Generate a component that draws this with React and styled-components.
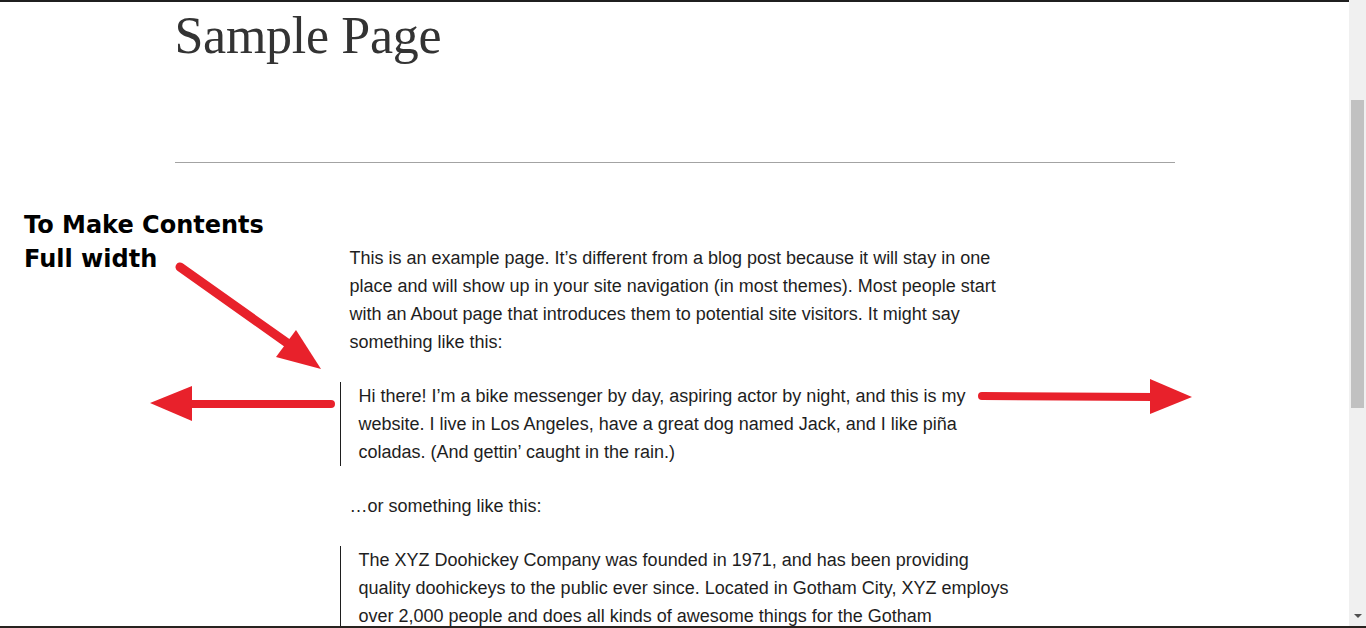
import React from "react";
import styled, { createGlobalStyle } from "styled-components";

const GlobalStyle = createGlobalStyle`
  html, body {
    margin: 0;
    padding: 0;
    background: #ffffff;
    overflow: hidden;
  }
`;

const Window = styled.div`
  position: relative;
  width: 1366px;
  height: 628px;
  display: flex;
  flex-direction: column;
  overflow: hidden;
`;

const Viewport = styled.div`
  flex: 1;
  min-height: 0;
  display: flex;
`;

const Page = styled.main`
  flex: 1;
  min-width: 0;
  border-top: 2px solid #1f1f1f;
  overflow: hidden;
`;

const Header = styled.header`
  width: 1000px;
  margin: 0 auto;
`;

const Title = styled.h1`
  margin: 8px 0 0;
  font-family: "Liberation Serif", "Times New Roman", serif;
  font-size: 52px;
  font-weight: 400;
  line-height: 1;
  color: #333;
  letter-spacing: -0.3px;
`;

const Rule = styled.hr`
  margin: 100px 0 0;
  border: 0;
  border-top: 1px solid #a3a3a3;
`;

const Content = styled.article`
  width: 650px;
  margin: 81px auto 0;
  display: flex;
  flex-direction: column;
  gap: 26px;
  font-family: "Liberation Sans", Arial, sans-serif;
  font-size: 18px;
  line-height: 28px;
  color: #1e1e1e;
`;

const Paragraph = styled.p`
  margin: 0;
`;

const Quote = styled.blockquote`
  margin: 0 -14px 0 -10px;
  padding-left: 18px;
  border-left: 1px solid #1e1e1e;
`;

const Scrollbar = styled.div`
  width: 17px;
  background: #f0f0f0;
  display: flex;
  flex-direction: column;
  align-items: center;
  padding-top: 100px;
`;

const Thumb = styled.div`
  width: 13px;
  height: 308px;
  background: #c1c1c1;
`;

const Spacer = styled.div`
  flex: 1;
`;

const DownArrow = styled.div`
  width: 0;
  height: 0;
  margin-bottom: 8px;
  border-left: 4px solid transparent;
  border-right: 4px solid transparent;
  border-top: 4px solid #505050;
`;

const BottomBar = styled.div`
  height: 2px;
  background: #28231f;
`;

const Note = styled.div`
  position: absolute;
  left: 24px;
  top: 208px;
  font-family: "DejaVu Sans", Verdana, sans-serif;
  font-weight: 700;
  font-size: 24px;
  line-height: 34px;
  color: #000;
`;

const Overlay = styled.svg`
  position: absolute;
  left: 0;
  top: 0;
  pointer-events: none;
`;

const RED = "#e8212b";

const Arrows = () => (
  <Overlay width="1366" height="628" viewBox="0 0 1366 628">
    <g fill={RED} stroke={RED} strokeLinecap="round">
      <line x1="180" y1="267" x2="290" y2="345" strokeWidth="9" />
      <polygon points="296,330 276,357 321,369" stroke="none" />

      <line x1="331" y1="404" x2="185" y2="404" strokeWidth="8" />
      <polygon points="192,386 192,421 150,403" stroke="none" />

      <line x1="982" y1="396" x2="1155" y2="397" strokeWidth="8" />
      <polygon points="1150,379 1150,414 1192,397" stroke="none" />
    </g>
  </Overlay>
);

export default function App() {
  return (
    <>
      <GlobalStyle />
      <Window>
        <Viewport>
          <Page>
            <Header>
              <Title>Sample Page</Title>
              <Rule />
            </Header>
            <Content>
              <Paragraph>
                This is an example page. It’s different from a blog post because it will stay in one
                place and will show up in your site navigation (in most themes). Most people start
                with an About page that introduces them to potential site visitors. It might say
                something like this:
              </Paragraph>
              <Quote>
                <Paragraph>
                  Hi there! I’m a bike messenger by day, aspiring actor by night, and this is my
                  website. I live in Los Angeles, have a great dog named Jack, and I like piña
                  coladas. (And gettin’ caught in the rain.)
                </Paragraph>
              </Quote>
              <Paragraph>…or something like this:</Paragraph>
              <Quote>
                <Paragraph>
                  The XYZ Doohickey Company was founded in 1971, and has been providing quality
                  doohickeys to the public ever since. Located in Gotham City, XYZ employs over
                  2,000 people and does all kinds of awesome things for the Gotham community.
                </Paragraph>
              </Quote>
            </Content>
          </Page>
          <Scrollbar>
            <Thumb />
            <Spacer />
            <DownArrow />
          </Scrollbar>
        </Viewport>
        <BottomBar />
        <Note>
          To Make Contents
          <br />
          Full width
        </Note>
        <Arrows />
      </Window>
    </>
  );
}
